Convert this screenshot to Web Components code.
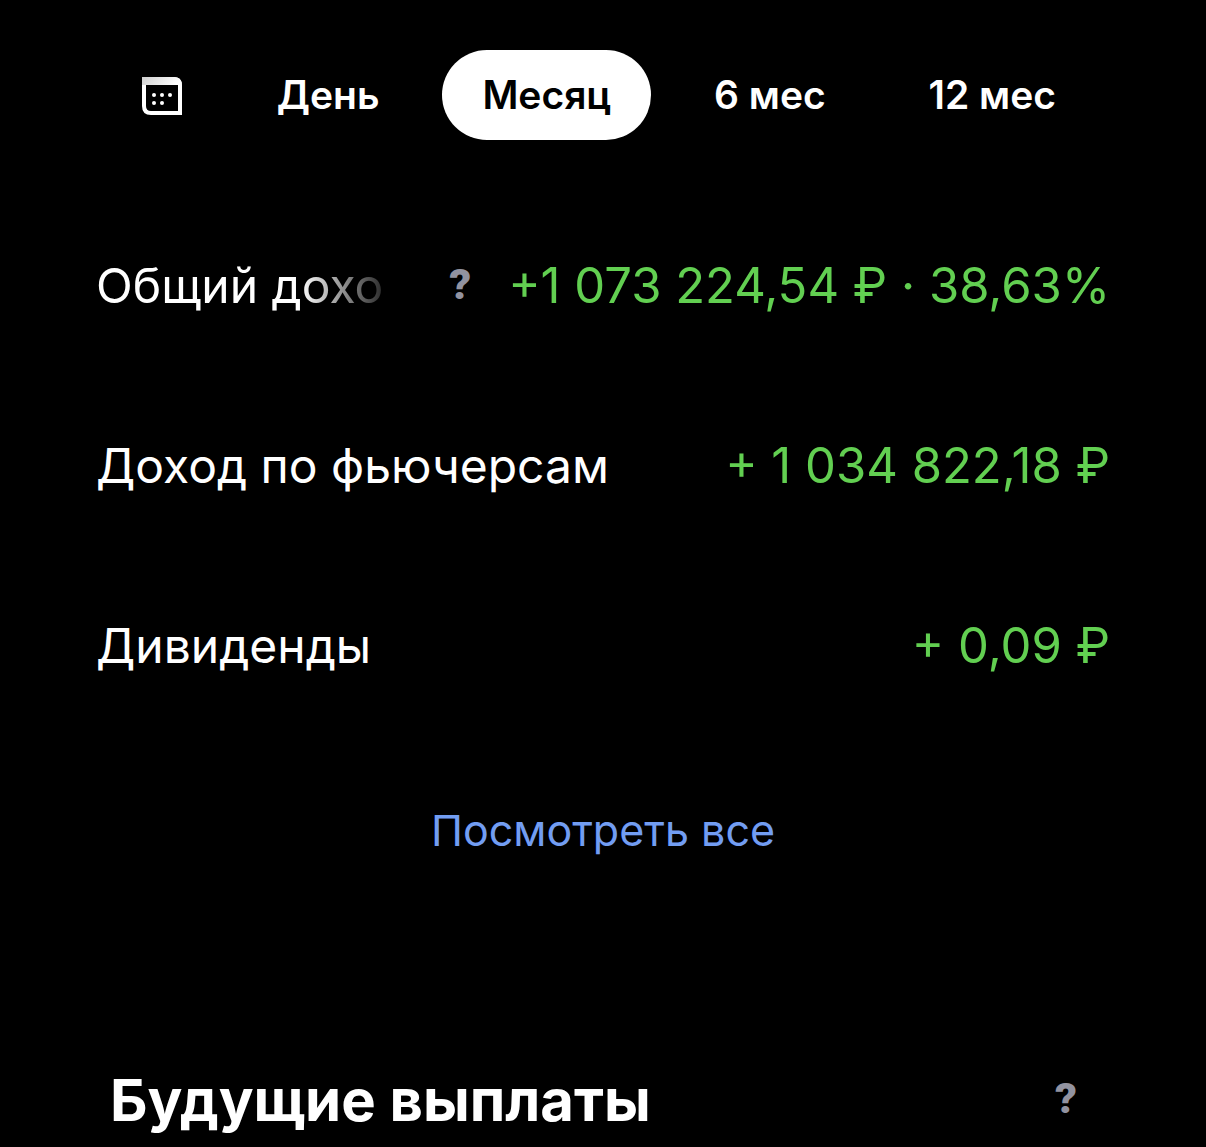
<!DOCTYPE html>
<html lang="ru">
<head>
  <meta charset="utf-8">
  <meta name="viewport" content="width=device-width, initial-scale=1">
  <title>Доход</title>
  <style>
    body {
      --text-color: #fff;
      --income-color: #62cf51;
      --link-color: #729df2;
      --muted-color: #9293a0;
      margin: 0;
      background-color: #000;
      color: var(--text-color);
      font-family: Inter, "Liberation Sans", sans-serif;
    }
  </style>
</head>
<body>
  <income-page>
    <period-tabs slot="tabs"></period-tabs>
    <income-row fade hint>
      Общий дохо
      <span slot="value">+1 073 224,54 ₽ · 38,63%</span>
    </income-row>
    <income-row>
      Доход по фьючерсам
      <span slot="value">+ 1 034 822,18 ₽</span>
    </income-row>
    <income-row>
      Дивиденды
      <span slot="value">+ 0,09 ₽</span>
    </income-row>
    <more-link slot="more" href="#all">Посмотреть все</more-link>
    <section-title slot="next">Будущие выплаты</section-title>
  </income-page>

  <script>
    class IncomePage extends HTMLElement {
      constructor() {
        super();

        this.attachShadow({ mode: 'open' });

        this.shadowRoot.innerHTML = `
          <style>
            :host {
              display: flex;
              flex-direction: column;
              box-sizing: border-box;
              padding: 50px 96px 16px;
            }

            .rows {
              display: flex;
              flex-direction: column;
              row-gap: 120px;
              padding: 116px 0 124px;
            }
          </style>
          <slot name="tabs"></slot>
          <div class="rows"><slot></slot></div>
          <slot name="more"></slot>
          <slot name="next"></slot>
        `;
      }
    }

    class PeriodTabs extends HTMLElement {
      constructor() {
        super();

        this.attachShadow({ mode: 'open' });

        this.shadowRoot.innerHTML = `
          <style>
            :host {
              display: flex;
              justify-content: space-between;
              padding: 0 14px 0 6px;
            }

            button {
              display: flex;
              align-items: center;
              height: 90px;
              padding: 0 40px;
              border: none;
              border-radius: 45px;
              background: none;
              color: inherit;
              font-family: inherit;
              font-weight: 600;
              font-size: 39px;
              line-height: 48px;
              white-space: nowrap;
              cursor: pointer;
            }

            button[aria-pressed="true"] {
              background-color: #fff;
              color: #000;
            }

            .calendar {
              padding-right: 32px;
            }

            svg {
              display: block;
            }
          </style>
          <button class="calendar" type="button" aria-label="Календарь">
            <svg width="40" height="40" viewBox="0 0 40 40" aria-hidden="true">
              <defs>
                <linearGradient id="top" x1="0" y1="0" x2="1" y2="0.2">
                  <stop offset="0" stop-color="#d0d0d0"/>
                  <stop offset="1" stop-color="#fff"/>
                </linearGradient>
              </defs>
              <path fill="#fff" fill-rule="evenodd" d="M0 2H32Q40 2 40 10V40H9Q0 40 0 31ZM4 10V31Q4 36 9 36H36V10Z"/>
              <path fill="url(#top)" d="M0 2H32Q38 2 39.5 8V10H0Z"/>
              <g fill="#fff">
                <circle cx="12" cy="20" r="2"/>
                <circle cx="20" cy="20" r="2"/>
                <circle cx="28" cy="20" r="2"/>
                <circle cx="12" cy="28" r="2"/>
                <circle cx="20" cy="28" r="2"/>
              </g>
            </svg>
          </button>
          <button type="button" aria-pressed="false">День</button>
          <button type="button" aria-pressed="true">Месяц</button>
          <button type="button" aria-pressed="false">6 мес</button>
          <button type="button" aria-pressed="false">12 мес</button>
        `;

        this.shadowRoot.addEventListener('click', event => {
          const button = event.target.closest('button[aria-pressed]');
          if (button) {
            this.select(button);
          }
        });
      }

      select(button) {
        this.shadowRoot.querySelectorAll('button[aria-pressed]').forEach(item => {
          item.setAttribute('aria-pressed', String(item === button));
        });
      }
    }

    class HintButton extends HTMLElement {
      constructor() {
        super();

        this.attachShadow({ mode: 'open' });

        this.shadowRoot.innerHTML = `
          <style>
            :host {
              display: block;
              flex: none;
            }

            button {
              display: block;
              width: 40px;
              padding: 0;
              border: none;
              background: none;
              color: var(--muted-color);
              font-family: Roboto, "Liberation Sans", sans-serif;
              font-weight: 900;
              font-size: 43px;
              line-height: 56px;
              text-align: center;
              cursor: pointer;
            }
          </style>
          <button type="button" title="Подробнее">?</button>
        `;
      }
    }

    class IncomeRow extends HTMLElement {
      constructor() {
        super();

        this.attachShadow({ mode: 'open' });

        this.shadowRoot.innerHTML = `
          <style>
            :host {
              display: flex;
              justify-content: space-between;
              font-size: 49px;
              line-height: 60px;
              white-space: nowrap;
            }

            .label {
              flex: 1;
              min-width: 0;
              overflow: hidden;
              font-size: 48px;
            }

            :host([fade]) .label {
              -webkit-mask-image: linear-gradient(to left, transparent, #000 100px);
              mask-image: linear-gradient(to left, transparent, #000 100px);
            }

            hint-button {
              margin: 0 28px 0 40px;
            }

            :host(:not([hint])) hint-button {
              display: none;
            }

            .value {
              flex: none;
              color: var(--income-color);
            }
          </style>
          <div class="label"><slot></slot></div>
          <hint-button></hint-button>
          <div class="value"><slot name="value"></slot></div>
        `;
      }
    }

    class MoreLink extends HTMLElement {
      constructor() {
        super();

        this.attachShadow({ mode: 'open' });

        this.shadowRoot.innerHTML = `
          <style>
            :host {
              display: block;
              text-align: center;
              line-height: 60px;
            }

            a {
              color: var(--link-color);
              font-size: 43px;
              text-decoration: none;
            }
          </style>
          <a><slot></slot></a>
        `;
      }

      connectedCallback() {
        this.shadowRoot.querySelector('a').href = this.getAttribute('href') || '#';
      }
    }

    class SectionTitle extends HTMLElement {
      constructor() {
        super();

        this.attachShadow({ mode: 'open' });

        this.shadowRoot.innerHTML = `
          <style>
            :host {
              display: flex;
              justify-content: space-between;
              padding: 200px 24px 0 14px;
            }

            h2 {
              margin: 0;
              font-weight: 700;
              font-size: 58px;
              line-height: 60px;
            }
          </style>
          <h2><slot></slot></h2>
          <hint-button></hint-button>
        `;
      }
    }

    customElements.define('hint-button', HintButton);
    customElements.define('income-page', IncomePage);
    customElements.define('period-tabs', PeriodTabs);
    customElements.define('income-row', IncomeRow);
    customElements.define('more-link', MoreLink);
    customElements.define('section-title', SectionTitle);
  </script>
</body>
</html>
